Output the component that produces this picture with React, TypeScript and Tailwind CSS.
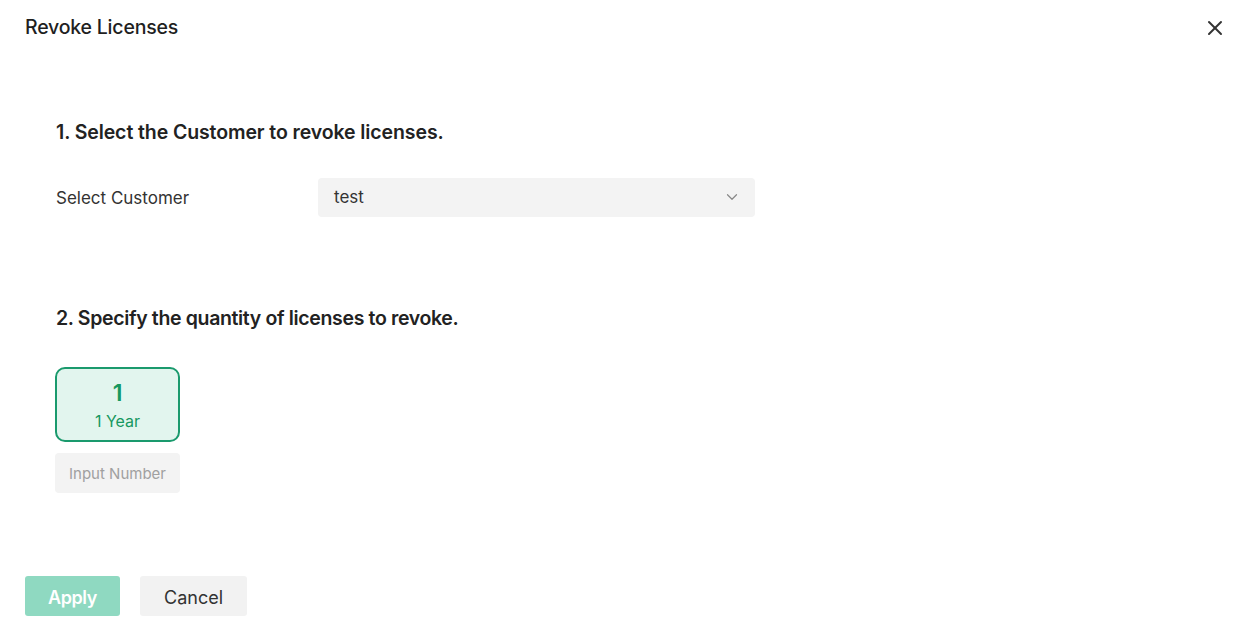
import React from 'react';
import { X, ChevronDown } from 'lucide-react';

const font = { fontFamily: 'Inter, "Noto Sans", sans-serif' };

export default function App() {
  return (
    <div className="relative h-[631px] w-[1235px] bg-white text-[#222]" style={font}>
      <div className="flex items-center justify-between pl-[25px] pr-[7px] pt-[13px]">
        <h1 className="text-[19.5px] font-medium tracking-[-0.2px] text-[#1f1f1f]">Revoke Licenses</h1>
        <button className="flex h-[26px] w-[26px] items-center justify-center text-[#333]">
          <X size={24} strokeWidth={2} />
        </button>
      </div>

      <div className="px-[56px] pt-[76px]">
        <h2 className="text-[19.5px] font-semibold tracking-[-0.1px] text-[#222]">
          1. Select the Customer to revoke licenses.
        </h2>
        <div className="mt-[30px] flex items-center">
          <span className="w-[262px] pt-[3px] text-[17px] text-[#333]">Select Customer</span>
          <div className="flex h-[39px] w-[437px] items-center justify-between rounded-[4px] bg-[#f3f3f3] pl-[16px] pr-[14px]">
            <span className="pt-[1px] text-[17px] text-[#333]">test</span>
            <ChevronDown size={18} strokeWidth={1.6} className="text-[#888]" />
          </div>
        </div>

        <h2 className="mt-[87px] text-[19.5px] font-semibold tracking-[-0.35px] text-[#222]">
          2. Specify the quantity of licenses to revoke.
        </h2>
        <div className="ml-[-1px] mt-[34px] flex w-[125px] flex-col gap-[11px]">
          <div className="flex h-[75px] flex-col items-center justify-center rounded-[10px] border-2 border-[#1a9a6d] bg-[#e2f5ee] pt-[3px] text-[#16985f]">
            <span className="text-[23px] font-semibold leading-[28px]">1</span>
            <span className="mt-[3px] text-[16px] leading-[22px]">1 Year</span>
          </div>
          <div className="flex h-[40px] items-center justify-center rounded-[4px] bg-[#f3f3f3] pt-[3px] text-[15px] text-[#a0a0a0]">
            Input Number
          </div>
        </div>
      </div>

      <div className="mt-[83px] flex gap-[20px] px-[25px]">
        <button className="h-[40px] w-[95px] rounded-[3px] bg-[#8fd9c1] pt-[3px] text-[18px] font-semibold tracking-[-0.4px] text-white">
          Apply
        </button>
        <button className="h-[40px] w-[107px] rounded-[3px] bg-[#f2f2f2] pt-[3px] text-[18px] text-[#333]">
          Cancel
        </button>
      </div>
    </div>
  );
}
